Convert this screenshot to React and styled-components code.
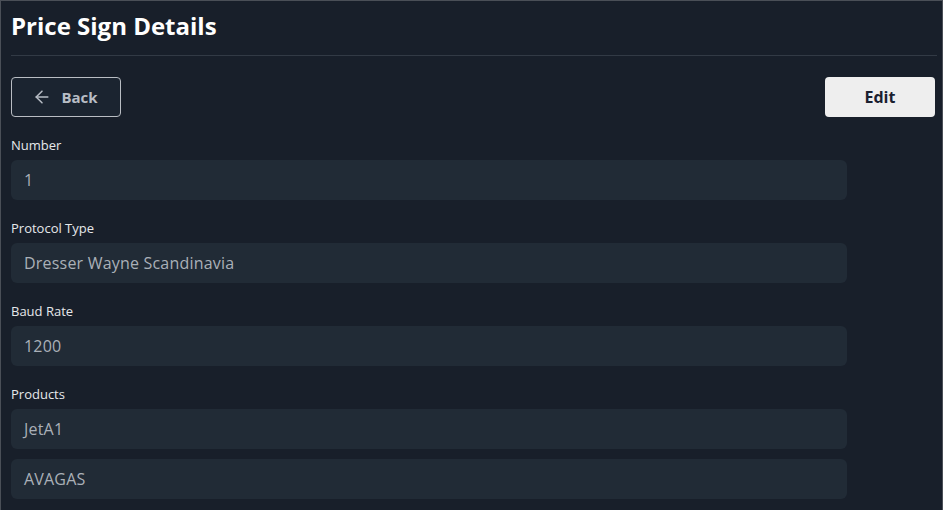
import React from 'react';
import styled, { createGlobalStyle } from 'styled-components';

const GlobalStyle = createGlobalStyle`
  html, body {
    margin: 0;
    padding: 0;
    background: #181f2a;
  }
  body {
    font-family: "Open Sans", Lato, sans-serif;
  }
`;

const Page = styled.div`
  box-sizing: border-box;
  width: 943px;
  height: 510px;
  overflow: hidden;
  background: #181f2a;
  border: 1px solid #4a4f57;
  border-bottom: none;
  padding: 0 5px 0 10px;
`;

const Title = styled.h1`
  margin: 0;
  padding: 10px 0 14px;
  font-size: 24px;
  font-weight: 700;
  color: #ffffff;
  line-height: 30px;
  border-bottom: 1px solid #323a45;
`;

const Toolbar = styled.div`
  display: flex;
  justify-content: space-between;
  align-items: center;
  margin-top: 21px;
  padding-right: 2px;
`;

const OutlineButton = styled.button`
  box-sizing: border-box;
  display: flex;
  align-items: center;
  justify-content: center;
  gap: 9px;
  width: 110px;
  height: 40px;
  border: 1px solid #b9bdc3;
  border-radius: 4px;
  background: #1b2430;
  color: #b8bdc5;
  font-family: inherit;
  font-size: 15px;
  font-weight: 700;
  padding: 0 2px 0 0;
`;

const SolidButton = styled.button`
  box-sizing: border-box;
  width: 110px;
  height: 40px;
  border: none;
  border-radius: 4px;
  background: #eeeeee;
  color: #1a2030;
  font-family: inherit;
  font-size: 16px;
  font-weight: 700;
`;

const Form = styled.div`
  display: flex;
  flex-direction: column;
  margin-top: 19px;
`;

const Group = styled.div`
  display: flex;
  flex-direction: column;
  gap: 10px;
  margin-bottom: 19px;
`;

const Label = styled.div`
  font-size: 13px;
  line-height: 18px;
  color: #e6e8eb;
  margin-bottom: -4px;
`;

const Field = styled.div`
  box-sizing: border-box;
  width: 836px;
  height: 40px;
  display: flex;
  align-items: center;
  padding: 0 13px;
  background: #212b36;
  border-radius: 6px;
  color: #aab0b8;
  font-size: 16px;
  letter-spacing: 0.2px;
`;

const ArrowLeft = () => (
  <svg width="20" height="20" viewBox="0 0 24 24" fill="none" stroke="currentColor" strokeWidth="1.8" strokeLinecap="round" strokeLinejoin="round">
    <path d="M19 12H5" />
    <path d="M12 19l-7-7 7-7" />
  </svg>
);

const fields = [
  { label: 'Number', values: ['1'] },
  { label: 'Protocol Type', values: ['Dresser Wayne Scandinavia'] },
  { label: 'Baud Rate', values: ['1200'] },
  { label: 'Products', values: ['JetA1', 'AVAGAS'] },
];

export default function App() {
  return (
    <>
      <GlobalStyle />
      <Page>
        <Title>Price Sign Details</Title>
        <Toolbar>
          <OutlineButton>
            <ArrowLeft />
            Back
          </OutlineButton>
          <SolidButton>Edit</SolidButton>
        </Toolbar>
        <Form>
          {fields.map(f => (
            <Group key={f.label}>
              <Label>{f.label}</Label>
              {f.values.map(v => (
                <Field key={v}>{v}</Field>
              ))}
            </Group>
          ))}
        </Form>
      </Page>
    </>
  );
}
